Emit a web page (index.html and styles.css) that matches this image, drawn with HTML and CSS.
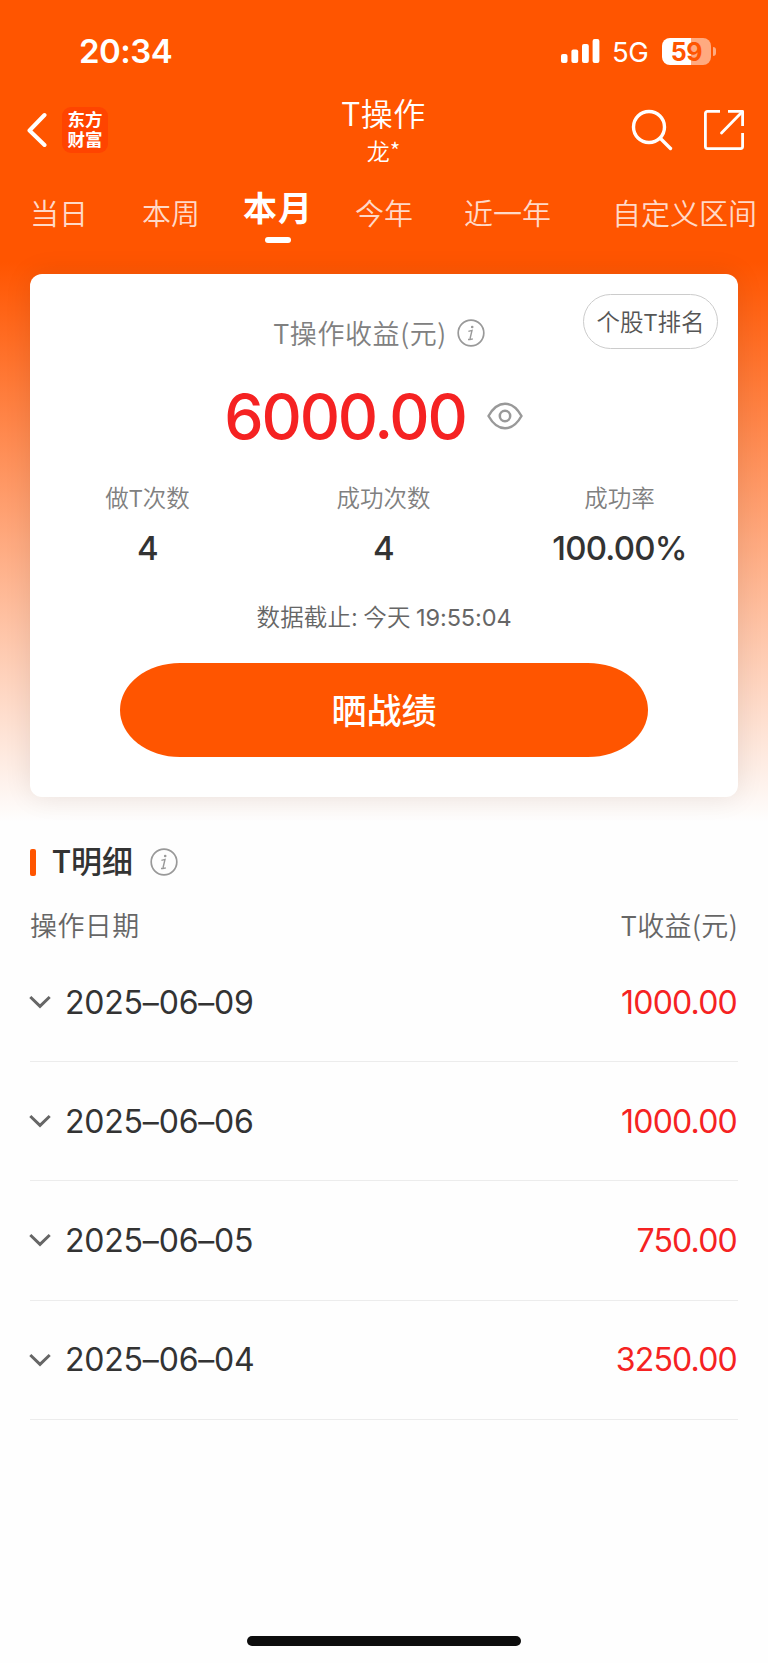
FILE: index.html
```
<!DOCTYPE html>
<html lang="zh-CN">
<head>
    <meta charset="UTF-8">
    <title>T操作</title>
    <link rel="stylesheet" href="styles.css">
</head>
<body>
    <div class="page">
        <div class="status-bar">
            <span class="time">20:34</span>
            <div class="status-right">
                <svg class="signal" width="39" height="24" viewBox="0 0 39 24" fill="#fff">
                    <rect x="0" y="15" width="6.5" height="9" rx="2"/>
                    <rect x="10.4" y="10.5" width="6.8" height="13.5" rx="2"/>
                    <rect x="21" y="5" width="6.8" height="19" rx="2"/>
                    <rect x="31.6" y="0" width="6.8" height="24" rx="2"/>
                </svg>
                <span class="network">5G</span>
                <div class="battery">59</div>
                <span class="battery-tip"></span>
            </div>
        </div>

        <div class="navbar">
            <div class="nav-left">
                <svg class="back" width="20" height="36" viewBox="0 0 20 36" fill="none" stroke="#fff" stroke-width="4" stroke-linecap="round" stroke-linejoin="round">
                    <path d="M17.5 3 2.5 18.5 17.5 33"/>
                </svg>
                <div class="logo">东方财富</div>
            </div>
            <div class="nav-title">
                <h1>T操作</h1>
                <p>龙*</p>
            </div>
            <div class="nav-right">
                <svg width="42" height="42" viewBox="0 0 42 42" fill="none" stroke="#fff" stroke-width="3.4" stroke-linecap="round">
                    <circle cx="18" cy="18" r="15.5"/>
                    <path d="M29.5 29.5 39.5 39.5"/>
                </svg>
                <svg width="42" height="42" viewBox="0 0 42 42" fill="none" stroke="#fff" stroke-width="2.8" stroke-linejoin="round">
                    <path d="M17 2.4H4.4a2 2 0 0 0-2 2v33.2a2 2 0 0 0 2 2h33.2a2 2 0 0 0 2-2V24"/>
                    <path d="M25 2.4h14.6V17"/>
                    <path d="M39 3 18.5 24" stroke-linecap="round"/>
                </svg>
            </div>
        </div>

        <div class="tabs">
            <span class="tab">当日</span>
            <span class="tab">本周</span>
            <span class="tab active">本月</span>
            <span class="tab">今年</span>
            <span class="tab">近一年</span>
            <span class="tab">自定义区间</span>
        </div>

        <div class="card">
            <div class="card-title">
                <span>T操作收益(元)</span>
                <svg class="info" width="28" height="28" viewBox="0 0 28 28">
                    <circle cx="14" cy="14" r="12.8" fill="none" stroke="#999" stroke-width="1.7"/>
                    <circle cx="15.2" cy="8" r="1.3" fill="#999"/>
                    <path d="M11.4 12.4 15 11.4 13.2 19q-.5 2 2.7.9M11 20.5h2.5" fill="none" stroke="#999" stroke-width="1.4"/>
                </svg>
            </div>
            <button class="rank-btn">个股T排名</button>
            <div class="profit">
                <span class="amount">6000.00</span>
                <svg width="36" height="28" viewBox="0 0 36 28" fill="none" stroke="#999" stroke-width="2.5">
                    <path d="M1.5 14C6 6 12 1.7 18 1.7S30 6 34.5 14C30 22 24 26.3 18 26.3S6 22 1.5 14Z" stroke-linejoin="round"/>
                    <circle cx="18" cy="14" r="5.2"/>
                </svg>
            </div>
            <div class="stats">
                <div class="stat"><span class="label">做T次数</span><span class="value">4</span></div>
                <div class="stat"><span class="label">成功次数</span><span class="value">4</span></div>
                <div class="stat"><span class="label">成功率</span><span class="value">100.00%</span></div>
            </div>
            <div class="deadline">数据截止: 今天 <span class="clock">19:55:04</span></div>
            <button class="share-btn">晒战绩</button>
        </div>

        <div class="detail">
            <div class="detail-title">
                <span class="mark"></span>
                <h2>T明细</h2>
                <svg class="info" width="28" height="28" viewBox="0 0 28 28">
                    <circle cx="14" cy="14" r="12.8" fill="none" stroke="#999" stroke-width="1.7"/>
                    <circle cx="15.2" cy="8" r="1.3" fill="#999"/>
                    <path d="M11.4 12.4 15 11.4 13.2 19q-.5 2 2.7.9M11 20.5h2.5" fill="none" stroke="#999" stroke-width="1.4"/>
                </svg>
            </div>
            <div class="detail-head">
                <span>操作日期</span>
                <span>T收益(元)</span>
            </div>
            <div class="row">
                <svg class="arrow" width="22" height="14" viewBox="0 0 22 14"><path d="M1.3 2 11 11.3 20.7 2"/></svg>
                <span class="date">2025–06–09</span>
                <span class="money">1000.00</span>
            </div>
            <div class="row">
                <svg class="arrow" width="22" height="14" viewBox="0 0 22 14"><path d="M1.3 2 11 11.3 20.7 2"/></svg>
                <span class="date">2025–06–06</span>
                <span class="money">1000.00</span>
            </div>
            <div class="row">
                <svg class="arrow" width="22" height="14" viewBox="0 0 22 14"><path d="M1.3 2 11 11.3 20.7 2"/></svg>
                <span class="date">2025–06–05</span>
                <span class="money">750.00</span>
            </div>
            <div class="row">
                <svg class="arrow" width="22" height="14" viewBox="0 0 22 14"><path d="M1.3 2 11 11.3 20.7 2"/></svg>
                <span class="date">2025–06–04</span>
                <span class="money">3250.00</span>
            </div>
        </div>

        <div class="home-bar"></div>
    </div>
</body>
</html>
```
FILE: styles.css
```
* {
    box-sizing: border-box;
}
body {
    margin: 0;
    font-family: "Noto Sans CJK SC", sans-serif;
    font-weight: 350;
    background: #fefefe;
}
h1, h2, p {
    margin: 0;
}
button {
    font-family: inherit;
    padding: 0;
}
svg {
    display: block;
    flex: none;
}
.page {
    display: flex;
    flex-direction: column;
    width: 768px;
    height: 1663px;
    overflow: hidden;
    background: linear-gradient(#ff5500 0, #ff5500 262px, #fefefe 822px);
}

/* status bar */
.status-bar {
    display: flex;
    justify-content: space-between;
    align-items: center;
    height: 102px;
    padding: 0 52px 0 79px;
    color: #fff;
    font-family: Inter, sans-serif;
}
.time {
    font-size: 33px;
    font-weight: 600;
    letter-spacing: -0.5px;
}
.status-right {
    display: flex;
    align-items: center;
}
.network {
    margin: 2px 13px 0 12px;
    width: 37px;
    font-size: 27.5px;
    font-weight: 400;
    letter-spacing: -0.4px;
    white-space: nowrap;
}
.battery {
    width: 49px;
    height: 27px;
    border-radius: 8px;
    background: linear-gradient(90deg, #fff 59%, #ffaa80 59%);
    color: #ff5500;
    font-size: 25px;
    font-weight: 700;
    line-height: 28px;
    letter-spacing: -0.4px;
    text-align: center;
}
.battery-tip {
    width: 3px;
    height: 9px;
    margin-left: 2px;
    border-radius: 0 4px 4px 0;
    background: #ffaa80;
}

/* navbar */
.navbar {
    display: grid;
    grid-template-columns: 1fr 200px 1fr;
    height: 74px;
    padding: 0 23px 0 27px;
    color: #fff;
}
.nav-left {
    display: flex;
    align-items: center;
    gap: 15px;
    height: 56px;
}
.logo {
    width: 46px;
    height: 46px;
    padding: 2px 5px;
    border-radius: 9px;
    background: #ff4400;
    font-size: 17.5px;
    font-weight: 700;
    line-height: 20px;
    text-align: center;
}
.nav-title {
    margin-left: -5px;
    text-align: center;
}
.nav-title h1 {
    margin-top: -11px;
    font-size: 32px;
    font-weight: 350;
    line-height: 42px;
    letter-spacing: 0.5px;
}
.nav-title p {
    font-size: 23px;
    line-height: 35px;
}
.nav-right {
    display: flex;
    justify-content: flex-end;
    align-items: center;
    gap: 30px;
    height: 56px;
}

/* tabs */
.tabs {
    display: flex;
    height: 98px;
    padding-left: 30px;
    color: #ffd9c8;
    font-size: 29px;
    line-height: 73px;
    white-space: nowrap;
}
.tab:nth-child(2) {
    margin-left: 54px;
}
.tab.active {
    display: flex;
    flex-direction: column;
    align-items: center;
    margin: 0 42px 0 43px;
    color: #fff;
    font-size: 34px;
    font-weight: 700;
    line-height: 61px;
    letter-spacing: 1px;
}
.tab.active::after {
    content: "";
    width: 26px;
    height: 6px;
    border-radius: 3px;
    background: #fff;
}
.tab:nth-child(5) {
    margin: 0 61px 0 51px;
}

/* summary card */
.card {
    display: grid;
    grid-template-rows: 96px 90px 103px 94px 94px;
    grid-template-columns: 1fr;
    justify-items: center;
    height: 523px;
    margin: 0 30px;
    border-radius: 12px;
    background: #fff;
    box-shadow: 0 0 28px rgba(0, 0, 0, 0.09);
}
.card-title {
    grid-area: 1 / 1;
    display: flex;
    align-items: center;
    gap: 10px;
    height: 56px;
    margin-top: 31px;
    margin-left: -10px;
    color: #808080;
    font-size: 27px;
    letter-spacing: 0.6px;
    line-height: 55px;
    white-space: nowrap;
}
.card-title span {
    height: 56px;
}
.rank-btn {
    grid-area: 1 / 1;
    justify-self: end;
    width: 135px;
    height: 55px;
    margin: 20px 20px 0 0;
    padding-bottom: 2px;
    border: 1.5px solid #ccc;
    border-radius: 28px;
    background: #fff;
    color: #555;
    font-size: 23.5px;
    font-weight: 350;
}
.profit {
    display: flex;
    align-items: center;
    gap: 21px;
    margin-left: -21px;
    padding-top: 1px;
}
.amount {
    color: #f52222;
    font-family: Inter, sans-serif;
    font-size: 62.5px;
    font-weight: 550;
    line-height: 80px;
    letter-spacing: -2.2px;
}
.stats {
    display: grid;
    grid-template-columns: repeat(3, 236px);
    align-content: start;
    margin-left: -1px;
    padding-top: 20px;
}
.stat {
    display: flex;
    flex-direction: column;
    align-items: center;
}
.label {
    color: #808080;
    font-size: 23.5px;
    line-height: 34px;
}
.value {
    margin-top: 14px;
    color: #333;
    font-family: Inter, sans-serif;
    font-size: 33px;
    font-weight: 550;
    line-height: 40px;
    letter-spacing: -0.8px;
}
.deadline {
    padding-top: 36px;
    color: #666;
    font-size: 23.5px;
    line-height: 34px;
    letter-spacing: 0.2px;
}
.clock {
    font-family: Inter, sans-serif;
    font-weight: 400;
    letter-spacing: -0.1px;
}
.share-btn {
    width: 528px;
    height: 94px;
    margin-top: 6px;
    padding-bottom: 4px;
    border: none;
    border-radius: 60px / 47px;
    background: #ff5500;
    color: #fff;
    font-size: 35px;
    font-weight: 500;
}

/* detail list */
.detail {
    padding: 39px 30px 0;
}
.detail-title {
    display: flex;
    align-items: center;
    height: 52px;
}
.mark {
    width: 6px;
    height: 27px;
    border-radius: 2px;
    background: #ff5500;
}
.detail-title h2 {
    margin: 0 17px 0 16px;
    padding-bottom: 4px;
    color: #333;
    font-size: 31px;
    font-weight: 500;
    line-height: 48px;
}
.detail-head {
    display: flex;
    justify-content: space-between;
    height: 55px;
    padding-top: 17px;
    color: #666;
    font-size: 27px;
    line-height: 40px;
    letter-spacing: 0.4px;
}
.row {
    display: flex;
    align-items: center;
    height: 119.2px;
    border-bottom: 1px solid #ececec;
    font-family: Inter, sans-serif;
    font-size: 32px;
    font-weight: 400;
}
.arrow {
    margin-left: -1px;
    fill: none;
    stroke: #666;
    stroke-width: 3;
}
.date {
    margin-left: 14px;
    color: #333;
    letter-spacing: -0.2px;
}
.money {
    margin-left: auto;
    padding-right: 1px;
    color: #f52222;
    letter-spacing: -0.8px;
}
.home-bar {
    width: 274px;
    height: 10px;
    margin: auto auto 17px;
    border-radius: 5px;
    background: #0d0d0d;
}
```
